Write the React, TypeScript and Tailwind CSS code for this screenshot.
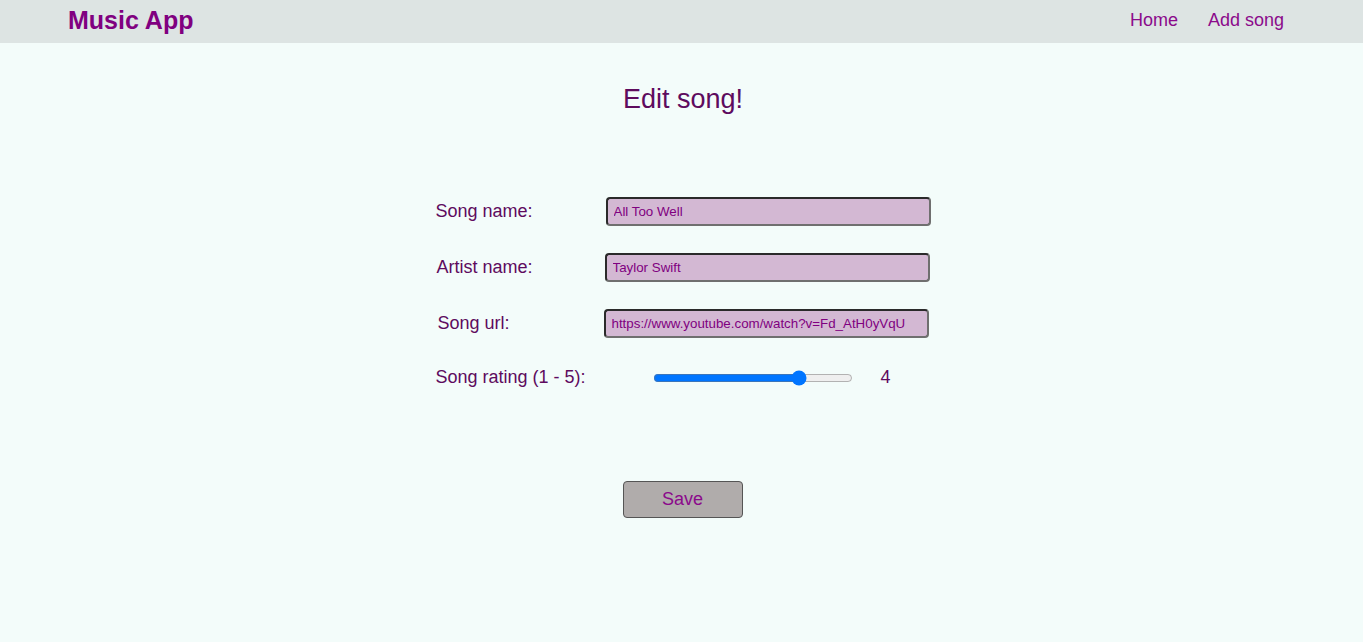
import { useState } from "react";

const rows = [
  { label: "Song name:", value: "All Too Well", shift: "ml-[2px]", inShift: "ml-[1px]" },
  { label: "Artist name:", value: "Taylor Swift", shift: "ml-[3px]", inShift: "ml-0" },
  { label: "Song url:", value: "https://www.youtube.com/watch?v=Fd_AtH0yVqU", shift: "ml-[4px]", inShift: "-ml-[1px]" },
];

export default function App() {
  const [rating, setRating] = useState(4);

  return (
    <div className="min-h-[642px] bg-[#f3fcfa] font-['Liberation_Sans',Arial,sans-serif]">
      <header className="flex h-[43px] items-center justify-between bg-[#dde4e3] pb-[2px] pl-[68px] pr-[79px]">
        <span className="text-[25px] font-bold text-[#800080]">Music App</span>
        <nav className="flex gap-[30px] pl-[1px] text-[18px] text-[#8b0a8b]">
          <a href="#">Home</a>
          <a href="#">Add song</a>
        </nav>
      </header>

      <main className="flex flex-col items-center">
        <h1 className="mt-[39px] ml-[3px] text-[27px] leading-[34px] text-[#5e0b5e]">Edit song!</h1>

        <form className="mt-[81px] grid w-[496px] grid-cols-[171px_325px] items-center gap-y-[27px]">
          {rows.map((r) => (
            <div key={r.label} className="contents">
              <label className={`${r.shift} text-[18px] text-[#5e0b5e]`}>{r.label}</label>
              <input
                defaultValue={r.value}
                className={`${r.inShift} h-[29px] w-[325px] rounded-[4px] border-2 border-t-[#2a2a2a] border-l-[#2a2a2a] border-b-[#6f6f6f] border-r-[#6f6f6f] bg-[#d3b8d3] px-[6px] text-[13.33px] text-[#800080] outline-none`}
              />
            </div>
          ))}
          <label className="-mt-[1px] ml-[2px] text-[18px] text-[#5e0b5e]">Song rating (1 - 5):</label>
          <div className="-mt-[1px] flex items-center pl-[48px]">
            <input
              type="range"
              min={1}
              max={5}
              value={rating}
              onChange={(e) => setRating(Number(e.target.value))}
              className="w-[200px] accent-[#0075ff]"
            />
            <span className="ml-[28px] text-[18px] text-[#5e0b5e]">{rating}</span>
          </div>
        </form>

        <button
          type="button"
          className="mt-[90px] ml-[2px] h-[37px] w-[120px] rounded-[4px] border border-[#555] bg-[#b0acab] text-[18px] text-[#8b0a8b]"
        >
          Save
        </button>
      </main>
    </div>
  );
}
